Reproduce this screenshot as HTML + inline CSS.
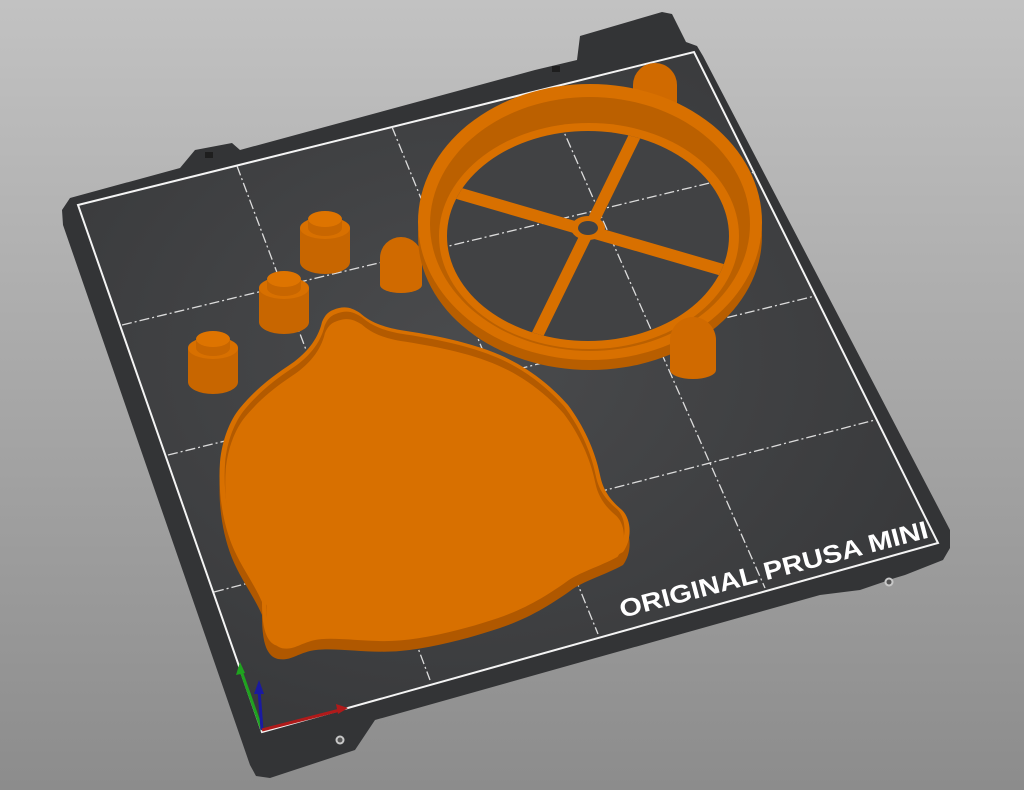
<!DOCTYPE html>
<html><head><style>
html,body{margin:0;padding:0;width:1024px;height:790px;overflow:hidden;background:#a8a8a8}
</style></head><body>
<svg width="1024" height="790" viewBox="0 0 1024 790" xmlns="http://www.w3.org/2000/svg">
<defs>
<linearGradient id="bg" x1="0" y1="0" x2="0" y2="1">
<stop offset="0" stop-color="#c2c2c2"/><stop offset="1" stop-color="#8c8c8c"/>
</linearGradient>
<radialGradient id="bedg" cx="0.45" cy="0.45" r="0.6">
<stop offset="0" stop-color="#4a4b4d"/><stop offset="1" stop-color="#38393b"/>
</radialGradient>
<g id="grid">
<line x1="237" y1="166" x2="430" y2="680"/>
<line x1="392" y1="127" x2="598" y2="634"/>
<line x1="545" y1="89" x2="765" y2="588"/>
<line x1="122" y1="325" x2="755" y2="172"/>
<line x1="168" y1="455" x2="815" y2="296"/>
<line x1="214" y1="592" x2="875" y2="420"/>
</g>
<clipPath id="hole"><ellipse cx="588" cy="236" rx="141" ry="105"/></clipPath>
<path id="plate" d="M333,310 C345,305 352,308 360,313 C368,320 378,326 400,330 C433,335 470,342 500,355 C530,368 553,388 568,405 C583,425 595,450 600,475 C603,490 610,500 622,510 C632,520 632,540 623,552 C605,562 583,568 570,578 C553,590 530,605 500,615 C470,625 433,635 400,638 C367,641 330,633 310,638 C295,642 290,648 278,646 C265,643 262,625 262,602 C255,585 240,565 232,545 C222,520 218,490 220,462 C222,440 230,420 240,408 C255,390 270,378 288,366 C305,355 318,340 322,322 C325,315 328,312 333,310 Z"/>
</defs>
<rect width="1024" height="790" fill="url(#bg)"/>
<!-- bed -->
<path d="M70,198 L180,168 L195,150 L232,143 L240,150 L535,70 L577,60 L580,36 L662,12 L672,14 L686,42 L697,46 L703,56 L950,530 L950,548 L943,560 L905,575 L895,578 L860,590 L820,595 L375,720 L355,750 L270,778 L256,776 L250,765 L63,225 L62,210 Z" fill="#333436"/>
<path d="M78,205 L694,52 L938,543 L262,732 Z" fill="url(#bedg)" stroke="#f4f4f4" stroke-width="2"/>
<g stroke="#dcdcdc" stroke-width="1.3" stroke-dasharray="10,3,2,3" fill="none"><use href="#grid"/></g>
<circle cx="340" cy="740" r="4.5" fill="#c8c8c8"/><circle cx="340" cy="740" r="2.5" fill="#555"/>
<circle cx="889" cy="582" r="4.5" fill="#c8c8c8"/><circle cx="889" cy="582" r="2.5" fill="#555"/>
<rect x="205" y="152" width="8" height="6" fill="#1e1e1e"/>
<rect x="552" y="66" width="8" height="6" fill="#1e1e1e"/>
<text x="0" y="0" transform="translate(622,618) rotate(-14.7)" font-family="Liberation Sans, sans-serif" font-weight="bold" font-size="25" fill="#fff" textLength="318" lengthAdjust="spacingAndGlyphs">ORIGINAL PRUSA MINI</text>
<!-- axes -->
<line x1="262" y1="730" x2="240" y2="668" stroke="#1fa31f" stroke-width="3"/>
<polygon points="240,662 236,675 245,673" fill="#1fa31f"/>
<line x1="262" y1="730" x2="259" y2="690" stroke="#1a1aa0" stroke-width="3"/>
<polygon points="259,680 254,694 264,694" fill="#1a1aa0"/>
<line x1="262" y1="730" x2="340" y2="710" stroke="#b01a1a" stroke-width="3"/>
<polygon points="348,708 336,704 338,714" fill="#b01a1a"/>
<!-- cylinders -->
<g>
<path d="M300,228 L300,262 A25,12 0 0 0 350,262 L350,228 Z" fill="#c86600"/>
<ellipse cx="325" cy="228" rx="25" ry="11" fill="#d87000"/>
<path d="M308,220 L308,228 A17,8 0 0 0 342,228 L342,220 Z" fill="#c86600"/>
<ellipse cx="325" cy="219" rx="17" ry="8" fill="#de7400"/>
</g>
<g>
<path d="M259,288 L259,322 A25,12 0 0 0 309,322 L309,288 Z" fill="#c86600"/>
<ellipse cx="284" cy="288" rx="25" ry="11" fill="#d87000"/>
<path d="M267,280 L267,288 A17,8 0 0 0 301,288 L301,280 Z" fill="#c86600"/>
<ellipse cx="284" cy="279" rx="17" ry="8" fill="#de7400"/>
</g>
<g>
<path d="M188,348 L188,382 A25,12 0 0 0 238,382 L238,348 Z" fill="#c86600"/>
<ellipse cx="213" cy="348" rx="25" ry="11" fill="#d87000"/>
<path d="M196,340 L196,348 A17,8 0 0 0 230,348 L230,340 Z" fill="#c86600"/>
<ellipse cx="213" cy="339" rx="17" ry="8" fill="#de7400"/>
</g>
<!-- bumps -->
<path d="M380,258 A21,21 0 0 1 422,258 L422,285 A21,8 0 0 1 380,285 Z" fill="#d06a00"/>
<path d="M633,85 A22,22 0 0 1 677,85 L677,105 A22,8 0 0 1 633,105 Z" fill="#d06a00"/>
<!-- ring -->
<ellipse cx="590" cy="236" rx="172" ry="134" fill="#b85e00"/>
<ellipse cx="590" cy="222" rx="172" ry="138" fill="#d87000"/>
<ellipse cx="590" cy="224" rx="160" ry="127" fill="#bb6000"/>
<ellipse cx="589" cy="236" rx="150" ry="113" fill="#d87000"/>
<ellipse cx="588" cy="236" rx="141" ry="105" fill="#414244"/>
<g clip-path="url(#hole)" stroke="#dcdcdc" stroke-width="1.3" stroke-dasharray="10,3,2,3" fill="none"><use href="#grid"/></g>
<g stroke="#d87000" stroke-width="12" clip-path="url(#hole)">
<line x1="645" y1="115" x2="530" y2="350"/>
<line x1="440" y1="188" x2="740" y2="275"/>
</g>
<ellipse cx="588" cy="228" rx="17" ry="12" fill="#d87000"/>
<ellipse cx="588" cy="228" rx="10" ry="7" fill="#414244"/>
<path d="M670,340 A23,23 0 0 1 716,340 L716,370 A23,9 0 0 1 670,370 Z" fill="#d06a00"/>
<!-- plate -->
<use href="#plate" fill="#b05800" transform="translate(0,13)"/>
<use href="#plate" fill="#d87000"/>
<use href="#plate" fill="#b35a00" transform="translate(425 475) scale(0.975) translate(-425 -475)"/>
<use href="#plate" fill="#d87000" transform="translate(0 7) translate(425 475) scale(0.972) translate(-425 -475)"/>
</svg>
</body></html>
